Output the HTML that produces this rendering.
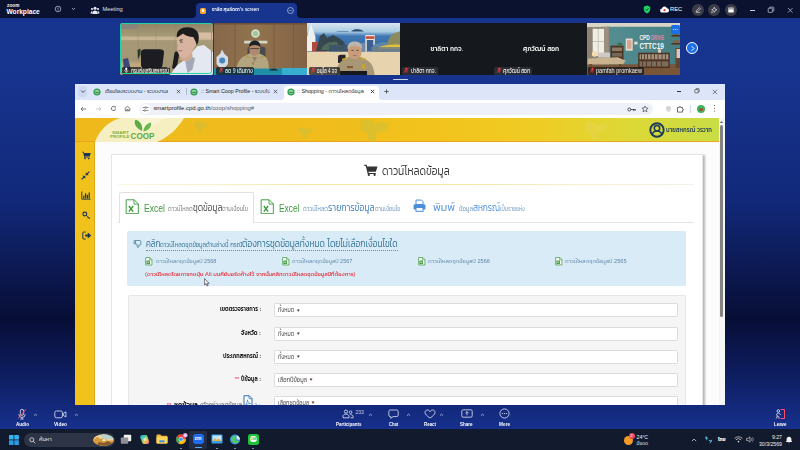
<!DOCTYPE html>
<html lang="th">
<head>
<meta charset="utf-8">
<title>Zoom Workplace</title>
<style>
html,body{margin:0;padding:0;}
body{width:800px;height:450px;overflow:hidden;position:relative;
 font-family:"Liberation Sans","Kanit","Prompt","Noto Sans Thai","Loma",sans-serif;
 background:linear-gradient(to bottom,#17348f 0px,#17348f 70px,#12297a 200px,#0a1446 290px,#070e36 318px,#0c1a58 365px,#16308c 428px);}
.abs{position:absolute;}
.t{position:absolute;white-space:nowrap;line-height:1;}
/* top bar */
#topbar{left:0;top:0;width:800px;height:17px;background:#0b1230;border-top:.8px solid #0b1230;}
/* taskbar */
#taskbar{left:0;top:429.300px;width:800px;height:21px;background:#121a2e;}
/* browser */
#browser{left:75px;top:83.700px;width:649.600px;height:321.300px;background:#fff;overflow:hidden;}

.k{font-family:"Liberation Sans","Kanit","Prompt","Noto Sans Thai","Loma",sans-serif;font-weight:300;}
.sx{display:inline-block;transform-origin:0 50%;white-space:nowrap;}
.sel{position:absolute;left:199px;width:403.500px;height:14px;background:#fff;border:.6px solid #dcdcdc;border-radius:1.500px;box-sizing:border-box;}
.sel .t{left:6px;top:4.300px;font-size:5.600px;color:#444;}
.lab{position:absolute;right:458px;white-space:nowrap;line-height:1;font-size:6px;color:#222;font-weight:500;}
.xl{position:absolute;top:139.500px;}
</style>
</head>
<body>
<div id="topbar" class="abs">
 <div class="t" style="left:7px;top:2.5px;font-size:4.6px;font-weight:bold;color:#fff;letter-spacing:.1px;">zoom</div>
 <div class="t" style="left:6.5px;top:8px;font-size:6.6px;font-weight:bold;color:#fff;">Workplace</div>
 <svg class="abs" style="left:53px;top:3px" width="10" height="10" viewBox="0 0 10 10"><circle cx="5" cy="5" r="2.8" fill="none" stroke="#c9cfe0" stroke-width=".7"/><path d="M5 3.6v2.2" stroke="#c9cfe0" stroke-width=".7"/><circle cx="5" cy="6.6" r=".35" fill="#c9cfe0"/></svg>
 <svg class="abs" style="left:70px;top:5px" width="7" height="6" viewBox="0 0 7 6"><path d="M2 2l1.5 1.6L5 2" fill="none" stroke="#c9cfe0" stroke-width=".7"/></svg>
 <svg class="abs" style="left:90px;top:4.5px" width="10" height="9" viewBox="0 0 10 9"><circle cx="5" cy="2.3" r="1.5" fill="#e8ebf5"/><circle cx="2" cy="3" r="1.1" fill="#e8ebf5"/><circle cx="8" cy="3" r="1.1" fill="#e8ebf5"/><path d="M2.3 8c0-2.2 1-3.4 2.7-3.4S7.7 5.800 7.700 8z" fill="#e8ebf5"/><path d="M.6 7.400c0-1.600.6-2.500 1.700-2.500v2.500zM9.400 7.400c0-1.600-.6-2.500-1.700-2.500v2.500z" fill="#e8ebf5"/></svg>
 <div class="t" style="left:102.500px;top:6px;font-size:5.700px;color:#dfe3ee;">Meeting</div>
 <!-- screen tab -->
 <div class="abs" style="left:195.500px;top:1.500px;width:101.500px;height:16px;background:#17348f;border-radius:4px 4px 0 0;"></div>
 <svg class="abs" style="left:191.500px;top:13px" width="4" height="4" viewBox="0 0 4 4"><path d="M4 0v4H0A4 4 0 0 0 4 0z" fill="#17348f"/></svg>
 <svg class="abs" style="left:297px;top:13px" width="4" height="4" viewBox="0 0 4 4"><path d="M0 0v4h4A4 4 0 0 1 0 0z" fill="#17348f"/></svg>
 <div class="abs" style="left:200px;top:6.500px;width:6px;height:6px;border-radius:1.500px;background:#f5a623;"></div>
 <div class="abs" style="left:202.200px;top:8.300px;width:1.600px;height:2.400px;background:#fff;border-radius:.4px;"></div>
 <div class="t" style="left:211.500px;top:6.200px;font-size:5.400px;font-weight:600;color:#e6e9f5;"><span class="sx" id="z20" style="width:47px;transform:scaleX(0.827);">ชาลิต ศุมล์ตตา's screen</span></div>
 <svg class="abs" style="left:286px;top:5px" width="9" height="9" viewBox="0 0 9 9"><circle cx="4.500" cy="4.500" r="3" fill="none" stroke="#dfe3ee" stroke-width=".6"/><circle cx="3.100" cy="4.500" r=".4" fill="#dfe3ee"/><circle cx="4.500" cy="4.500" r=".4" fill="#dfe3ee"/><circle cx="5.900" cy="4.500" r=".4" fill="#dfe3ee"/></svg>
 <!-- right controls -->
 <svg class="abs" style="left:642.500px;top:4px" width="8" height="9" viewBox="0 0 8 9"><path d="M4 .5l3.200 1.200v2.600c0 2-1.400 3.400-3.200 4.200C2.200 7.700.8 6.300.8 4.300V1.700z" fill="#23d160"/><path d="M2.600 4.400l1 1 1.800-2" fill="none" stroke="#0b1230" stroke-width=".7"/></svg>
 <svg class="abs" style="left:660px;top:5px" width="9" height="7" viewBox="0 0 9 7"><path d="M2.300 6.500a2 2 0 0 1-.3-4 2.600 2.600 0 0 1 5-.2 2.100 2.100 0 0 1-.2 4.200z" fill="#fff"/><circle cx="4.500" cy="4.200" r="1.100" fill="#e02828"/></svg>
 <div class="t" style="left:670px;top:5.800px;font-size:5.800px;color:#fff;">REC</div>
 <div class="abs" style="left:691.500px;top:2.500px;width:12px;height:12px;border-radius:6px;background:#3b3c48;"></div>
 <div class="abs" style="left:708px;top:2.500px;width:12px;height:12px;border-radius:6px;background:#3b3c48;"></div>
 <div class="abs" style="left:724.500px;top:2.500px;width:12px;height:12px;border-radius:6px;background:#3b3c48;"></div>
 <svg class="abs" style="left:691.500px;top:2.500px" width="12" height="12" viewBox="0 0 12 12"><path d="M4 8.200l.5-1.600 3-3 1.100 1.100-3 3zM4.800 8.600c1-.5 2.200.3 3.400-.4" fill="none" stroke="#fff" stroke-width=".6"/></svg>
 <svg class="abs" style="left:708px;top:2.500px" width="12" height="12" viewBox="0 0 12 12"><path d="M6.300 3.200l.8 1.800 1.800.8-1.800.8-.8 1.800-.8-1.800-1.800-.8 1.800-.8z" fill="none" stroke="#fff" stroke-width=".6"/><path d="M4 7.500v1.600M3.200 8.300h1.600" stroke="#fff" stroke-width=".5"/></svg>
 <svg class="abs" style="left:724.500px;top:2.500px" width="12" height="12" viewBox="0 0 12 12"><rect x="3.300" y="3.500" width="5.400" height="5" rx=".6" fill="#fff"/><path d="M3.300 5h5.400" stroke="#3b3c48" stroke-width=".5"/><path d="M4.600 3.500v1.400M6 3.500v1.400M7.400 3.500v1.400" stroke="#3b3c48" stroke-width=".4"/></svg>
 <div class="abs" style="left:750px;top:8.500px;width:5px;height:.7px;background:#c9cfe0;"></div>
 <svg class="abs" style="left:767px;top:5px" width="8" height="8" viewBox="0 0 8 8"><rect x="1.200" y="2.200" width="4.200" height="4.200" rx=".6" fill="none" stroke="#c9cfe0" stroke-width=".7"/><path d="M2.600 2.200V1.600c0-.3.200-.5.500-.5h3.200c.3 0 .5.200.5.500v3.200c0 .3-.2.500-.5.500h-.8" fill="none" stroke="#c9cfe0" stroke-width=".7"/></svg>
 <svg class="abs" style="left:787px;top:6px" width="7" height="7" viewBox="0 0 7 7"><path d="M1 1l4.600 4.600M5.600 1L1 5.600" stroke="#c9cfe0" stroke-width=".7"/></svg>
</div>
<!--VIDEOSTRIP-->
<div class="abs vt" style="left:120.00px;top:23px;width:93.33px;height:52px;overflow:hidden;border-radius:2.500px;background:#a69876;">
<svg class="abs" style="left:0;top:0" width="94" height="52" viewBox="0 0 94 52">
<defs><filter id="b1"><feGaussianBlur stdDeviation=".7"/></filter><filter id="b2"><feGaussianBlur stdDeviation="1.200"/></filter>
<linearGradient id="w1" x1="0" y1="0" x2="0" y2="1"><stop offset="0" stop-color="#8f8467"/><stop offset=".25" stop-color="#a89a78"/><stop offset="1" stop-color="#a29472"/></linearGradient></defs>
<rect width="94" height="52" fill="url(#w1)"/>
<rect x="0" y="0" width="18" height="6" fill="#7f8088" opacity=".6" filter="url(#b1)"/>
<rect x="0" y="13.500" width="94" height="3.600" fill="#c6b592" filter="url(#b1)"/>
<rect x="74" y="9.500" width="20" height="6" fill="#d9bca6" filter="url(#b1)"/>
<path d="M18 0v40M36 0v40M55 0v30" stroke="#93866a" stroke-width=".6" opacity=".7"/>
<rect x="0" y="39" width="40" height="13" fill="#c2a67e" filter="url(#b2)"/>
<g filter="url(#b1)">
<path d="M17.500 27l3-1.500v6l-2.500 5z" fill="#2b3a2a"/>
<path d="M21 29c0-2 1.500-2.800 4-2.800h14c3 0 5.500.8 5 3.500l-1.500 12.500c-.3 2-1.500 3-4 3H24c-2 0-3-1-3-3z" fill="#1d1e21"/>
<path d="M54.500 30c.5-1.500 2-1.800 3.500-1.500l1.500 1-3 16h-4.500z" fill="#1a1b1e"/>
<path d="M3 36l5-1 3 12-7 2z" fill="#3b4a78"/>
<path d="M50 52l6.800-9.500 9-6.500 11.600-12.800 6.500-1.300 9.600 7.700V52z" fill="#e3e8f1"/>
<path d="M65 37l5.500-4 4.500 2.500-2.500 11-5 3.500z" fill="#a3a9b8"/>
<path d="M59 30l6 1 7-3 .5 6-5 4.500-7-1.500z" fill="#d0a88f"/>
<path d="M57 14c0-5.500 3.500-9 10-9 6.500 0 10.500 4 10.500 9.500 0 4.500-1.500 8-3.500 10.500l-3 6c-2 3-5.500 4.500-8.500 3.500-3-1-5-4-5.300-8.500z" fill="#d8b4a0"/>
<path d="M56.800 14.500C56 8.500 60 4.300 67.500 4.300c7.500 0 11.500 4.300 11.300 10.200-.1 3.300-.8 5.800-2 7.800-.8-3.200-1.800-5.800-3.600-8.300-4 0-7.800-1.300-10.200-3.500-1.500 1.200-3.700 2.600-6.200 4z" fill="#1b1a1b"/>
<path d="M59.300 17.300l3.600-.5M60 19.200c.8-.3 1.800-.3 2.600 0" stroke="#3a2a24" stroke-width=".9" fill="none"/>
<path d="M58.500 27.600c1.200.5 2.600.5 3.800 0" stroke="#9a5f55" stroke-width=".9" fill="none"/>
<path d="M57.800 20l-1.300 3.500 1.800.5z" fill="#c59a84"/>
</g>
</svg>
<div class="abs" style="left:2px;top:43.600px;width:47.5px;height:8px;background:rgba(20,22,28,.72);border-radius:1.500px;"><svg class="abs" style="left:1.3px;top:.9px" width="6.500" height="6.500" viewBox="0 0 5 5"><rect x="1.800" y=".3" width="1.400" height="2.600" rx=".7" fill="#fff"/><path d="M1.100 2.300a1.400 1.400 0 0 0 2.800 0M2.500 3.700v.9" fill="none" stroke="#fff" stroke-width=".45"/></svg><div class="t" style="left:8.500px;top:1px;font-size:6.300px;color:#f2f2f2;"><span class="sx" id="z31" style="width:38px;transform:scaleX(0.735);">กรมส่งเสริมสหกรณ์</span></div></div>
<div class="abs" style="left:0;top:0;width:90.100px;height:48.800px;border:1.600px solid #20d4a2;border-radius:2.500px;box-sizing:content-box;"></div>
</div><div class="abs vt" style="left:214.33px;top:23px;width:92.33px;height:52px;overflow:hidden;background:#8c6a47;">
<svg class="abs" style="left:0;top:0" width="93" height="52" viewBox="0 0 93 52">
<defs><linearGradient id="w2" x1="0" y1="0" x2="1" y2="0"><stop offset="0" stop-color="#86684a"/><stop offset=".45" stop-color="#92734f"/><stop offset="1" stop-color="#826245"/></linearGradient></defs>
<rect width="93" height="52" fill="url(#w2)"/>
<path d="M21 0v46M60 0v46M79.500 0v46" stroke="#74522f" stroke-width=".7" opacity=".8"/>
<rect x="0" y="0" width="93" height="1.500" fill="#6f5136"/>
<g filter="url(#b1)">
<circle cx="41.500" cy="10.500" r="4.300" fill="#cfe0c4"/><circle cx="41.500" cy="10.500" r="2.600" fill="#9cc79a"/>
<rect x="30" y="17.800" width="23.500" height="2.600" rx="1" fill="#cfd6c4"/>
<path d="M33.500 26c0-1.500 1-2.300 2.500-2.300h13c1.500 0 2.500.8 2.500 2.300v14h-18z" fill="#39464c" opacity=".85"/>
<path d="M8 26.500l2.500 4.500 3.500 3v7l-3 3.500H5.500l-3-3.500v-7l3.500-3z" fill="#d3dbe6"/>
<circle cx="8.200" cy="37.500" r="3" fill="#4a86bc"/>
<path d="M22.200 46.400c1-7 4-12 9.500-14l4.500-2.400h8.500l5 2.400c4 2 5 7 5.300 14z" fill="#b3a57f"/>
<path d="M38 34l2.600 5 2.600-5z" fill="#8f8363"/>
<path d="M35.500 23.500c0-3.500 2-5.800 5.300-5.800 3.300 0 5.300 2.300 5.300 5.800v3.500c0 3.300-2.300 5.600-5.300 5.600s-5.300-2.300-5.300-5.600z" fill="#b08a6c"/>
<path d="M35.200 24c-.4-4 2-6.600 5.600-6.600s6 2.600 5.600 6.600c-1.300-1.400-3.200-2.100-5.600-2.100s-4.200.7-5.600 2.100z" fill="#1f2326"/>
<path d="M36.300 25.600h9" stroke="#2a2624" stroke-width=".7"/>
<path d="M32 33l3 1.600M49.500 33l-3 1.600" stroke="#b89a3a" stroke-width="1.300"/>
<path d="M38 39.500h2M37.800 41h2.400" stroke="#8a5a3a" stroke-width=".6"/>
</g>
<rect x="0" y="45.500" width="93" height="6.500" fill="#1f8ea6"/>
<rect x="68" y="45" width="25" height="7" fill="#37add0"/>
<path d="M55 47.500c1-2.500 8-2.500 9 0z" fill="#1c2a33" filter="url(#b1)"/>
</svg>
<div class="abs" style="left:2px;top:43.600px;width:38px;height:8px;background:rgba(20,22,28,.72);border-radius:1.500px;"><svg class="abs" style="left:1.3px;top:.9px" width="6.500" height="6.500" viewBox="0 0 5 5"><rect x="1.800" y=".3" width="1.400" height="2.600" rx=".7" fill="#e23b3b"/><path d="M1.100 2.300a1.400 1.400 0 0 0 2.800 0M2.500 3.700v.9" fill="none" stroke="#e23b3b" stroke-width=".45"/><path d="M.7 4.500L4.300.4" stroke="#e23b3b" stroke-width=".5"/></svg><div class="t" style="left:8.500px;top:1px;font-size:6.300px;color:#f2f2f2;"><span class="sx" id="z32" style="width:28px;transform:scaleX(0.806);">ลด 9 เดินทาง</span></div></div>
</div><div class="abs vt" style="left:306.67px;top:23px;width:93.33px;height:52px;overflow:hidden;background:#e6d3ad;">
<svg class="abs" style="left:0;top:0" width="94" height="52" viewBox="0 0 94 52">
<defs><linearGradient id="s3" x1="0" y1="0" x2="0" y2="1"><stop offset="0" stop-color="#d9e6ee"/><stop offset=".3" stop-color="#a9cbe2"/><stop offset=".45" stop-color="#3f78b4"/><stop offset="1" stop-color="#35669c"/></linearGradient></defs>
<rect width="94" height="29" fill="url(#s3)"/>
<rect y="28.500" width="94" height="23.500" fill="#e7d4ae"/>
<g filter="url(#b1)">
<path d="M44 8.500c2-2 4.500-2.500 7-2.200 2.500.2 4.500 1 6 2.200z" fill="#2e4a6e"/>
<path d="M28 9h14l-1-.8h-9z" fill="#5b7fa6"/>
<path d="M0 28V14l2.500-9 1.500-4 1.500 4 3 9v14z" fill="#eef0ee"/>
<rect x="5" y="19" width="15" height="9.500" fill="#b24a3c"/>
<path d="M9 28l4-15 4-3 3 5 6-3 6 3 5 4 3 9z" fill="#36464f"/>
<path d="M14 27c2-6 8-9 16-8l4 8z" fill="#4f6a58"/>
<rect x="22" y="22" width="20" height="6.500" fill="#3c5568"/>
<rect x="58.300" y="12" width="9.500" height="16.500" fill="#e9e4dc"/><rect x="59.800" y="17" width="6.500" height="11.500" fill="#3a5f90"/><rect x="58.800" y="13.300" width="8.500" height="2.500" fill="#c8483a"/><rect x="42" y="20" width="16" height="8.500" fill="#6f8aa6"/>
<path d="M66 28V22l10-3 8 1 10 4v4z" fill="#5e86a6"/>
<path d="M80 22c1-6 4-11 8-12l6-2v16l-7 1z" fill="#8c8a5e"/>
<path d="M72 24c6-2 14-3 22-2v4c-8 0-15 0-22 .5z" fill="#e2c23a"/>
<rect x="64" y="24" width="30" height="5" fill="#6d7c86" opacity=".8"/>
<path d="M31 40v-6c0-1.500 1-2.300 2.500-2.300h5V40z" fill="#26272b"/>
<path d="M29 52c.5-8 3-13.500 8-15.500l6-3.500h9l6.500 3.500c5.500 2 8.500 7.500 9 15.500z" fill="#a89774"/>
<path d="M41 26c0-4 2.500-6.500 6.800-6.500 4.200 0 6.700 2.500 6.700 6.500v3.500c0 4-3 6.500-6.700 6.500-3.800 0-6.800-2.500-6.800-6.500z" fill="#c79d7c"/>
<path d="M40.500 26c-.5-5 2.500-7.500 7.300-7.500 4.700 0 7.700 2.500 7.200 7.500-1.500-2-4-3.300-7.200-3.300s-5.800 1.300-7.300 3.300z" fill="#b9b6b0"/>
<path d="M35 36.500l6-1.500M59 36.500l-6-1.500" stroke="#c9a433" stroke-width="1.600"/><path d="M44.300 27.300h2.400M49.300 27.300h2.400" stroke="#4a362c" stroke-width=".8"/><path d="M46 32.300c1.200.5 2.600.5 3.800 0" stroke="#a0605a" stroke-width=".8" fill="none"/>
<rect x="40" y="43" width="6" height="2.200" fill="#8c5a3a"/><rect x="55" y="41.500" width="3" height="4" fill="#c9a433"/>
</g>
<rect x="33" y="48" width="27" height="4" fill="#17181b"/>
</svg>
<div class="abs" style="left:2px;top:43.600px;width:31px;height:8px;background:rgba(20,22,28,.72);border-radius:1.500px;"><svg class="abs" style="left:1.3px;top:.9px" width="6.500" height="6.500" viewBox="0 0 5 5"><rect x="1.800" y=".3" width="1.400" height="2.600" rx=".7" fill="#e23b3b"/><path d="M1.100 2.300a1.400 1.400 0 0 0 2.800 0M2.500 3.700v.9" fill="none" stroke="#e23b3b" stroke-width=".45"/><path d="M.7 4.500L4.300.4" stroke="#e23b3b" stroke-width=".5"/></svg><div class="t" style="left:8.500px;top:1px;font-size:6.300px;color:#f2f2f2;"><span class="sx" id="z33" style="width:20px;transform:scaleX(0.732);">อนุโล 4 จจ</span></div></div>
</div><div class="abs vt" style="left:400.00px;top:23px;width:93.53px;height:52px;overflow:hidden;background:#15181c;">
<div class="t" style="left:46.6665px;top:21.500px;font-size:7px;font-weight:500;color:#fff;transform:translateX(-50%);"><span class="sx" id="z50" style="width:32.800px;transform:scaleX(0.917);">ชาลิตา กกจ.</span></div>
<div class="abs" style="left:2px;top:43.600px;width:36px;height:8px;background:#2a2d33;border-radius:1.500px;"><svg class="abs" style="left:1.3px;top:.9px" width="6.500" height="6.500" viewBox="0 0 5 5"><rect x="1.800" y=".3" width="1.400" height="2.600" rx=".7" fill="#e23b3b"/><path d="M1.100 2.300a1.400 1.400 0 0 0 2.800 0M2.500 3.700v.9" fill="none" stroke="#e23b3b" stroke-width=".45"/><path d="M.7 4.500L4.300.4" stroke="#e23b3b" stroke-width=".5"/></svg><div class="t" style="left:8.500px;top:1px;font-size:6.300px;color:#f2f2f2;"><span class="sx" id="z34" style="width:25px;transform:scaleX(0.780);">ปาลิตา กกจ.</span></div></div>
</div><div class="abs vt" style="left:493.33px;top:23px;width:93.53px;height:52px;overflow:hidden;background:#15181c;">
<div class="t" style="left:47.5px;top:21.500px;font-size:7px;font-weight:500;color:#fff;transform:translateX(-50%);"><span class="sx" id="z51" style="width:36px;transform:scaleX(0.934);">ศุภวัฒน์ สอก</span></div>
<div class="abs" style="left:1px;top:43.600px;width:37.5px;height:8px;background:#2a2d33;border-radius:1.500px;"><svg class="abs" style="left:1.3px;top:.9px" width="6.500" height="6.500" viewBox="0 0 5 5"><rect x="1.800" y=".3" width="1.400" height="2.600" rx=".7" fill="#e23b3b"/><path d="M1.100 2.300a1.400 1.400 0 0 0 2.800 0M2.500 3.700v.9" fill="none" stroke="#e23b3b" stroke-width=".45"/><path d="M.7 4.500L4.300.4" stroke="#e23b3b" stroke-width=".5"/></svg><div class="t" style="left:8.500px;top:1px;font-size:6.300px;color:#f2f2f2;"><span class="sx" id="z35" style="width:27px;transform:scaleX(0.787);">ศุภวัฒน์ สอก</span></div></div>
</div><div class="abs vt" style="left:586.66px;top:23px;width:93.33px;height:52px;overflow:hidden;background:#4f8a8c;">
<svg class="abs" style="left:0;top:0" width="94" height="52" viewBox="0 0 94 52">
<defs><linearGradient id="w6" x1="0" y1="0" x2="1" y2="0"><stop offset="0" stop-color="#5a9294"/><stop offset="1" stop-color="#457f84"/></linearGradient></defs>
<rect width="94" height="52" fill="url(#w6)"/>
<path d="M0 0h94v3.800H22L0 5z" fill="#d9d4c6"/>
<rect y="41.300" width="94" height="10.700" fill="#7a5638"/>
<g filter="url(#b1)">
<path d="M0 4.500l22-1v38H0z" fill="#8f8778"/>
<rect x="5.400" y="5.800" width="11.600" height="27" fill="#efeee4"/>
<path d="M11.200 5.800v27M5.400 18.500h11.600" stroke="#b9b3a2" stroke-width=".7"/>
<rect x=".5" y="4" width="5" height="34" fill="#8d8174"/><rect x="17" y="4" width="4.600" height="32" fill="#9a8f80"/>
<rect x="23.500" y="22.600" width="13" height="17" fill="#4f3422"/>
<rect x="25" y="24.500" width="10" height="3.600" fill="#8a7a66"/><rect x="25" y="30" width="10" height="3.600" fill="#75665a"/>
<path d="M30 22.500c.5-3.500 4.500-4 5.500-.5z" fill="#3c6e48"/>
<rect x="38.700" y="15.500" width="7" height="12.200" fill="#e6dccd"/><rect x="40" y="17.200" width="4.400" height="8.600" fill="#d8a48c"/>
<rect x="47.300" y="18.700" width="3.200" height="2.800" fill="#e6e0d4"/>
<circle cx="7.600" cy="31" r="2.800" fill="#f4dcae"/>
<rect x="11" y="29.500" width="12" height="5" fill="#cfcbc4"/>
<path d="M.9 35.500l30-1.300 8 3.500-3 3.600H.9z" fill="#c8b290"/>
<rect x="2.500" y="41" width="2.600" height="9" fill="#6b4d33"/><rect x="32" y="41" width="2.600" height="7" fill="#6b4d33"/>
<rect x="51.200" y="29.700" width="31.600" height="15.400" fill="#4e3321"/>
<rect x="52.600" y="31.300" width="28.800" height="5" fill="#a39480"/><rect x="52.600" y="38.300" width="28.800" height="5.200" fill="#7c6c5c"/>
<path d="M54.500 31.300v5M57.500 31.300v5M60.500 31.300v5M64 31.300v5M67.500 31.300v5M71 31.300v5M75 31.300v5M78.500 31.300v5M55.500 38.300v5.200M59.500 38.300v5.200M64.500 38.300v5.200M69.500 38.300v5.200M74.500 38.300v5.200" stroke="#553726" stroke-width=".9"/>
<rect x="71" y="26.300" width="3" height="3.400" fill="#d9cdb8"/>
<rect x="84.500" y="12" width="9.500" height="1.600" fill="#4f3422"/><rect x="84.500" y="20" width="9.500" height="1.600" fill="#4f3422"/>
<rect x="86" y="9" width="5" height="3" fill="#6f5a48"/><rect x="86" y="17" width="6" height="3" fill="#7a6450"/>
<rect x="88.500" y="25" width="5.500" height="20" fill="#5f4430"/>
<rect x="89.500" y="26" width="3.500" height="9" fill="#d5cab8"/>
</g>
<text x="52.400" y="16.600" font-family="Liberation Sans, sans-serif" font-size="6.800" font-weight="bold" fill="#f4f4f4" textLength="10.500" lengthAdjust="spacingAndGlyphs">CPD</text>
<text x="64" y="16.600" font-family="Liberation Sans, sans-serif" font-size="6.800" font-weight="bold" fill="#d88ab0" textLength="13" lengthAdjust="spacingAndGlyphs">DRIVE</text>
<text x="52.400" y="25.500" font-family="Liberation Sans, sans-serif" font-size="9.800" font-weight="bold" fill="#f4f4f4" textLength="24.600" lengthAdjust="spacingAndGlyphs">CTTC19</text>
</svg>
<div class="abs" style="left:84px;top:2px;width:9.300px;height:9px;background:#1a6fe8;border-radius:1.500px;"></div>
<div class="abs" style="left:86.300px;top:6.200px;width:1px;height:1px;border-radius:1px;background:#fff;box-shadow:1.800px 0 0 #fff,3.600px 0 0 #fff;"></div>
<div class="abs" style="left:1px;top:43.600px;width:56.5px;height:8px;background:rgba(20,22,28,.72);border-radius:1.500px;"><svg class="abs" style="left:1.3px;top:.9px" width="6.500" height="6.500" viewBox="0 0 5 5"><rect x="1.800" y=".3" width="1.400" height="2.600" rx=".7" fill="#e23b3b"/><path d="M1.100 2.300a1.400 1.400 0 0 0 2.800 0M2.500 3.700v.9" fill="none" stroke="#e23b3b" stroke-width=".45"/><path d="M.7 4.500L4.300.4" stroke="#e23b3b" stroke-width=".5"/></svg><div class="t" style="left:8.500px;top:1px;font-size:6.300px;color:#f2f2f2;"><span class="sx" id="z36" style="width:46px;transform:scaleX(0.888);">pamfah promkaew</span></div></div>
</div><div class="abs" style="left:685.600px;top:42.100px;width:10px;height:10px;border-radius:8px;background:#1a6fe8;border:1.800px solid #fff;"></div>
<svg class="abs" style="left:685.900px;top:42.400px" width="13" height="13" viewBox="0 0 13 13"><path d="M5.600 4.200l2.300 2.300-2.300 2.300" fill="none" stroke="#fff" stroke-width="1"/></svg>
<div class="abs" style="left:392.500px;top:79px;width:15px;height:1.200px;background:#dfe3ee;border-radius:1px;opacity:.9"></div>
<div id="browser" class="abs">
<!--BROWSER-->
<div class="abs" style="left:0;top:0;width:650px;height:16px;background:#dde6f8;"></div>
<div class="abs" style="left:3px;top:2.500px;width:9px;height:10.500px;border-radius:3px;background:#cdd9f2;"></div>
<svg class="abs" style="left:4.500px;top:5.500px" width="6" height="5" viewBox="0 0 6 5"><path d="M1.200 1.500L3 3.400l1.800-1.900" fill="none" stroke="#333" stroke-width=".8"/></svg>
<svg class="abs" style="left:18px;top:4.300px" width="8" height="8" viewBox="0 0 8 8"><circle cx="4" cy="4" r="3.600" fill="#2f9e58"/><circle cx="4" cy="4" r="2.300" fill="#8fd08f"/><path d="M2.300 4.600h3.400" stroke="#1c6b3a" stroke-width=".8"/></svg>
<div class="t" style="left:29.500px;top:5.200px;font-size:5.300px;font-weight:300;color:#222;width:63px;overflow:hidden;">เชื่อมโยงระบบงาน - ระบบงานสหกรณ์</div>
<svg class="abs" style="left:100.500px;top:5.500px" width="5" height="5" viewBox="0 0 5 5"><path d="M.8.800l3.400 3.400M4.200.8L.8 4.200" stroke="#333" stroke-width=".7"/></svg>
<div class="abs" style="left:110.800px;top:4.500px;width:.5px;height:7px;background:#aeb9d2;"></div>
<svg class="abs" style="left:114.5px;top:4.300px" width="8" height="8" viewBox="0 0 8 8"><circle cx="4" cy="4" r="3.600" fill="#2f9e58"/><circle cx="4" cy="4" r="2.300" fill="#8fd08f"/><path d="M2.300 4.600h3.400" stroke="#1c6b3a" stroke-width=".8"/></svg>
<div class="t" style="left:126px;top:5.200px;font-size:5.300px;font-weight:300;color:#222;width:69px;overflow:hidden;">:: Smart Coop Profile - ระบบโปรไฟล์</div>
<svg class="abs" style="left:197.500px;top:5.500px" width="5" height="5" viewBox="0 0 5 5"><path d="M.8.800l3.400 3.400M4.200.8L.8 4.200" stroke="#333" stroke-width=".7"/></svg>
<div class="abs" style="left:208.500px;top:2px;width:95px;height:14px;background:#fff;border-radius:3.500px 3.500px 0 0;"></div>
<svg class="abs" style="left:205.500px;top:13px" width="3" height="3" viewBox="0 0 3 3"><path d="M3 0v3H0A3 3 0 0 0 3 0z" fill="#fff"/></svg>
<svg class="abs" style="left:303.500px;top:13px" width="3" height="3" viewBox="0 0 3 3"><path d="M0 0v3h3A3 3 0 0 1 0 0z" fill="#fff"/></svg>
<svg class="abs" style="left:212px;top:4.300px" width="8" height="8" viewBox="0 0 8 8"><circle cx="4" cy="4" r="3.600" fill="#2f9e58"/><circle cx="4" cy="4" r="2.300" fill="#8fd08f"/><path d="M2.300 4.600h3.400" stroke="#1c6b3a" stroke-width=".8"/></svg>
<div class="t" style="left:222px;top:5.200px;font-size:5.300px;font-weight:300;color:#222;width:67px;overflow:hidden;">:: Shopping - ดาวน์โหลดข้อมูลสหกรณ์</div>
<svg class="abs" style="left:294.500px;top:5.500px" width="5" height="5" viewBox="0 0 5 5"><path d="M.8.800l3.400 3.400M4.200.8L.8 4.200" stroke="#222" stroke-width=".8"/></svg>
<svg class="abs" style="left:309px;top:5.500px" width="5" height="5" viewBox="0 0 5 5"><path d="M2.500.3v4.400M.3 2.500h4.400" stroke="#333" stroke-width=".7"/></svg>
<div class="abs" style="left:601.500px;top:7.500px;width:4px;height:.6px;background:#333;"></div>
<svg class="abs" style="left:618.500px;top:4.500px" width="6" height="6" viewBox="0 0 6 6"><rect x=".8" y="1.500" width="3.400" height="3.400" rx=".6" fill="none" stroke="#333" stroke-width=".6"/><path d="M1.800 1.500V1c0-.2.100-.3.300-.3h2.800c.2 0 .3.100.3.300v2.800c0 .2-.1.300-.3.300h-.6" fill="none" stroke="#333" stroke-width=".6"/></svg>
<svg class="abs" style="left:637px;top:5px" width="6" height="6" viewBox="0 0 6 6"><path d="M.8.800l4.200 4.200M5 .8L.8 5" stroke="#333" stroke-width=".6"/></svg>
<!-- toolbar -->
<div class="abs" style="left:0;top:16px;width:650px;height:18.500px;background:#fff;"></div>
<div class="abs" style="left:63.500px;top:19.200px;width:514.500px;height:12.500px;border-radius:6.300px;background:#eef1fa;"></div>
<div class="abs" style="left:65.500px;top:20.700px;width:9.500px;height:9.500px;border-radius:5px;background:#fff;"></div>
<svg class="abs" style="left:5px;top:22px" width="7" height="6" viewBox="0 0 7 6"><path d="M6 3H1.200M3 1L1 3l2 2" fill="none" stroke="#444" stroke-width=".7"/></svg>
<svg class="abs" style="left:20px;top:22px" width="7" height="6" viewBox="0 0 7 6"><path d="M1 3h4.800M4 1l2 2-2 2" fill="none" stroke="#b4b4b4" stroke-width=".7"/></svg>
<svg class="abs" style="left:34.500px;top:21.500px" width="7" height="7" viewBox="0 0 7 7"><path d="M5.600 3.500a2.100 2.100 0 1 1-.7-1.600" fill="none" stroke="#444" stroke-width=".7"/><path d="M5.800.9v1.500H4.300z" fill="#444"/></svg>
<svg class="abs" style="left:48.500px;top:21.500px" width="7" height="7" viewBox="0 0 7 7"><path d="M1.200 3.300L3.500 1.300l2.300 2v2.500H1.200z" fill="none" stroke="#444" stroke-width=".7"/><path d="M2.800 5.800V4.300h1.400v1.500" fill="none" stroke="#444" stroke-width=".6"/></svg>
<svg class="abs" style="left:66.500px;top:22px" width="7" height="6" viewBox="0 0 7 6"><path d="M.5 1.500h2.500M5 1.500h1.500M.5 4.500h1.500M4 4.500h2.500" stroke="#444" stroke-width=".6"/><circle cx="3.800" cy="1.500" r=".8" fill="none" stroke="#444" stroke-width=".6"/><circle cx="2.800" cy="4.500" r=".8" fill="none" stroke="#444" stroke-width=".6"/></svg>
<div class="t" style="left:78.400px;top:22px;font-size:5.950px;color:#202124;">smartprofile.cpd.go.th<span style="color:#5f6368">/coop/shopping#</span></div>
<svg class="abs" style="left:551.500px;top:22px" width="10" height="7" viewBox="0 0 10 7"><circle cx="2.300" cy="3.500" r="1.500" fill="none" stroke="#333" stroke-width=".8"/><path d="M3.800 3.500h4.800M6.600 3.500v1.600M8.200 3.500v1.400" stroke="#333" stroke-width=".8"/></svg>
<svg class="abs" style="left:565.500px;top:21px" width="8" height="8" viewBox="0 0 8 8"><path d="M4 1l.9 2 2.200.2-1.700 1.400.6 2.200L4 5.600 2 6.800l.6-2.200L.9 3.200 3.100 3z" fill="none" stroke="#333" stroke-width=".6"/></svg>
<svg class="abs" style="left:589.500px;top:21px" width="7" height="8" viewBox="0 0 7 8"><path d="M3.500.8l2.500.9v2c0 1.600-1 2.700-2.500 3.400C2 6.400 1 5.300 1 3.700v-2z" fill="#d4d6da"/></svg>
<svg class="abs" style="left:600.500px;top:21px" width="9" height="8" viewBox="0 0 9 8"><path d="M1.500 2.500h1.800c-.4-1.400 1.800-1.400 1.400 0h1.800v1.600c1.400-.4 1.400 1.800 0 1.400v1.600h-5z" fill="none" stroke="#333" stroke-width=".7"/></svg>
<div class="abs" style="left:614.500px;top:21.500px;width:.5px;height:7.500px;background:#d6dae6;"></div>
<div class="abs" style="left:622px;top:21.500px;width:8px;height:8px;border-radius:5px;background:#3fb45a;"></div>
<div class="abs" style="left:624px;top:24.300px;width:4px;height:3px;border-radius:2px 2px 1px 1px;background:#b5473c;"></div>
<div class="abs" style="left:639.200px;top:21.500px;width:1.100px;height:1.100px;border-radius:1px;background:#333;box-shadow:0 2.800px 0 #333,0 5.600px 0 #333;"></div>

<div id="page" class="abs" style="left:0;top:34.300px;width:643.500px;height:288px;background:#fcfcfc;overflow:hidden;">
 <!-- header -->
 <div class="abs" style="left:0;top:0;width:643.500px;height:24.500px;background:linear-gradient(to right,#efb91c 0,#f0bd1c 40%,#f2c41d 58%,#efcc24 72%,#dcd836 86%,#c9dd45 100%);border-bottom:1px solid #e9a51b;box-sizing:border-box;"></div>
 <svg class="abs" style="left:0;top:0" width="200" height="24" viewBox="0 0 200 24">
  <path d="M20 24C24 13 32 4 45 0h64C103 10 94 19 82 24z" fill="#f6efc2"/>
  <path d="M60 0h30C84 4 76 10 70 14 62 8 56 4 60 0z" fill="#fbf7dc" opacity=".7"/>
  <path d="M67 13C61 10 58 5 60.500 1.500 65 3 68 7 67 13z" fill="#5cae44"/>
  <path d="M68.500 13.500c0-4.500 3-8 7.500-9 .8 4-2 8-7.500 9z" fill="#6bb84e"/>
  <text x="37" y="15.500" font-family="Liberation Sans, sans-serif" font-size="4.200" font-weight="bold" fill="#7cb342" textLength="17" lengthAdjust="spacingAndGlyphs">SMART</text>
  <text x="35" y="20.300" font-family="Liberation Sans, sans-serif" font-size="4.200" font-weight="bold" fill="#7cb342" textLength="19.500" lengthAdjust="spacingAndGlyphs">PROFILE</text>
  <text x="55.500" y="20.500" font-family="Liberation Sans, sans-serif" font-size="8.500" font-weight="bold" fill="#5aaa44" textLength="24" lengthAdjust="spacingAndGlyphs">COOP</text>
 </svg>
 <!-- butterflies watermark -->
 <svg class="abs" style="left:90px;top:0" width="550" height="24" viewBox="0 0 550 24">
  <g fill="#b9c04a" opacity=".35">
  <path d="M30 4c3-2 6-1 7 2 2-2 5-2 6 0-1 3-3 4-6 4 1 2 0 4-2 5-2-1-3-3-2-5-3 0-5-2-3-6z"/>
  <path d="M134 10c3-2 6-1 7 2 2-2 5-2 6 0-1 3-3 4-6 4 1 2 0 4-2 5-2-1-3-3-2-5-3 0-5-2-3-6z"/>
  <path d="M196 3c6-3 13-2 15 4 4-4 10-4 13 0-2 6-7 8-13 8 2 4 0 8-4 9-4-2-6-5-4-9-6 0-10-5-7-12z"/>
  <path d="M420 5c5-3 10-2 12 3 3-3 8-3 10 0-1 5-5 7-10 7 1 3 0 6-3 8-3-2-5-5-3-8-5 0-8-4-6-10z" fill="#e8d860"/>
  </g>
 </svg>
 <!-- user -->
 <svg class="abs" style="left:573.500px;top:4.500px" width="16" height="16" viewBox="0 0 16 16"><circle cx="8" cy="8" r="6.700" fill="none" stroke="#1d3a5c" stroke-width="1.900"/><circle cx="8" cy="6.300" r="2.700" fill="none" stroke="#1d3a5c" stroke-width="1.500"/><path d="M3.300 12.500c.6-2.400 2.300-3.400 4.700-3.400s4.100 1 4.700 3.400" fill="none" stroke="#1d3a5c" stroke-width="1.500"/></svg>
 <div class="t" style="left:591.300px;top:8.600px;font-size:6.800px;color:#1d3a5c;font-weight:500;"><span class="sx" id="z40" style="width:46px;transform:scaleX(0.865);">นายสหกรณ์ วรวาท</span></div>
 <!-- sidebar -->
 <div class="abs" style="left:0;top:24.500px;width:20px;height:263px;background:#f2c21c;border-right:.6px solid #e0a91a;box-sizing:border-box;"></div>
 
 <svg class="abs" style="left:6.500px;top:33.500px" width="9" height="8.500" viewBox="0 0 9 8.500"><path d="M.3.800h1.500l.4 1.200h6.500l-1 3.400H2.800l.3 1h4.400v.7H2.400L1.200 1.600H.3z" fill="#1d3557"/><circle cx="3" cy="7.600" r=".8" fill="#1d3557"/><circle cx="6.800" cy="7.600" r=".8" fill="#1d3557"/></svg>
 <svg class="abs" style="left:6px;top:53.500px" width="9" height="9" viewBox="0 0 9 9"><path d="M8.400.6L5.800 3.200M.6 8.400l2.600-2.600" stroke="#1d3557" stroke-width="1.200"/><path d="M4.700 1.300v3h3zM4.300 7.700v-3h-3z" fill="#1d3557"/></svg>
 <svg class="abs" style="left:6px;top:73.500px" width="10" height="9" viewBox="0 0 10 9"><path d="M.8.500v7.700h8.700" fill="none" stroke="#1d3557" stroke-width=".9"/><rect x="2.200" y="4.500" width="1.200" height="3" fill="#1d3557"/><rect x="4" y="2.200" width="1.200" height="5.300" fill="#1d3557"/><rect x="5.800" y="3.800" width="1.200" height="3.700" fill="#1d3557"/><rect x="7.600" y="1.500" width="1.200" height="6" fill="#1d3557"/></svg>
 <svg class="abs" style="left:6.500px;top:93.500px" width="9" height="9" viewBox="0 0 9 9"><circle cx="2.800" cy="3" r="1.900" fill="none" stroke="#1d3557" stroke-width="1.100"/><path d="M4.300 4.300l3.700 3.300M6.300 6.200l-1 1M7.500 7.200l-.8.800" stroke="#1d3557" stroke-width="1"/></svg>
 <svg class="abs" style="left:6.500px;top:113.500px" width="10" height="9" viewBox="0 0 10 9"><path d="M3.600 1H1.800c-.6 0-1 .4-1 1v5c0 .6.400 1 1 1h1.800" fill="none" stroke="#1d3557" stroke-width="1"/><path d="M3.200 3.400h2.600V1.500L9.300 4.500 5.800 7.500V5.600H3.200z" fill="#1d3557"/></svg>

 
<div class="abs" style="left:35.5px;top:36.3px;width:592.500px;height:260px;background:#fff;border:.7px solid #e6e6e6;box-shadow:1.500px 1px 2px rgba(0,0,0,.28);box-sizing:border-box;"></div>
<svg class="abs" style="left:289px;top:46.3px" width="14" height="12" viewBox="0 0 14 12"><path d="M.3.800h2.300l.6 1.700h10.300l-1.600 5.200H4.400l.4 1.300h7v1H3.700L1.800 1.900H.3z" fill="#333"/><circle cx="4.800" cy="10.900" r="1.100" fill="#333"/><circle cx="10.600" cy="10.900" r="1.100" fill="#333"/></svg>
<div class="t k" style="left:306.8px;top:47.3px;font-size:12px;color:#333;"><span class="sx" id="f1" style="width:67.6px;transform:scaleX(0.850);">ดาวน์โหลดข้อมูล</span></div>
<div class="abs" style="left:43px;top:65.7px;width:576px;height:.9px;background:linear-gradient(to right,#fbf7e2 0,#f3e7a6 35%,#f3e7a6 60%,#f6f0d4 85%,#f4f1e6 100%);"></div>
<div class="abs" style="left:43px;top:104.5px;width:576px;height:.7px;background:#e4e4e4;"></div>
<div class="abs" style="left:43.8px;top:74px;width:135.500px;height:31.300px;background:#fff;border:.7px solid #e2e2e2;border-bottom:none;border-radius:2px 2px 0 0;box-sizing:border-box;"></div>
<svg class="abs" style="left:50px;top:80.8px" width="14.500" height="15.500" viewBox="0 0 15 16"><path d="M1.200.8h8.300l4.300 4.300v10.100H1.200z" fill="#fff" stroke="#3f9a3f" stroke-width="1"/><path d="M9.300.8v4.500h4.500" fill="none" stroke="#3f9a3f" stroke-width=".9"/><path d="M4 7.200l4.400 5.800M8.400 7.200L4 13" stroke="#3f9a3f" stroke-width="1.500"/></svg>
<div class="t k" style="left:68.6px;top:84.8px;font-size:10.6px;color:#3f9a3f;font-weight:400;"><span class="sx" id="f2" style="width:21px;transform:scaleX(0.811);">Excel</span></div>
<div class="t k" style="left:93px;top:85.3px;font-size:10px;color:#444;"><span class="sx" id="f3" style="width:24.6px;transform:scaleX(0.922);font-size:6.200px;color:#777;">ดาวน์โหลด</span><span class="sx" id="f4" style="width:29.4px;transform:scaleX(0.834);">ชุดข้อมูล</span><span class="sx" id="f5" style="width:26px;transform:scaleX(0.922);font-size:6.200px;color:#777;">ตามเงื่อนไข</span></div>
<svg class="abs" style="left:185px;top:80.8px" width="14.500" height="15.500" viewBox="0 0 15 16"><path d="M1.200.8h8.300l4.300 4.300v10.100H1.200z" fill="#fff" stroke="#3f9a3f" stroke-width="1"/><path d="M9.300.8v4.500h4.500" fill="none" stroke="#3f9a3f" stroke-width=".9"/><path d="M4 7.200l4.400 5.800M8.400 7.200L4 13" stroke="#3f9a3f" stroke-width="1.500"/></svg>
<div class="t k" style="left:204px;top:84.8px;font-size:10.6px;color:#3f9a3f;font-weight:400;"><span class="sx" id="f6" style="width:20.6px;transform:scaleX(0.795);">Excel</span></div>
<div class="t k" style="left:228px;top:85.3px;font-size:10px;color:#3b7bbf;"><span class="sx" id="f7" style="width:25px;transform:scaleX(0.937);font-size:6.200px;color:#6d93bd;">ดาวน์โหลด</span><span class="sx" id="f8" style="width:46.6px;transform:scaleX(0.862);">รายการข้อมูล</span><span class="sx" id="f9" style="width:25.4px;transform:scaleX(0.901);font-size:6.200px;color:#6d93bd;">ตามเงื่อนไข</span></div>
<svg class="abs" style="left:338.3px;top:81.3px" width="13" height="13.500" viewBox="0 0 13 13"><path d="M3 .8h5.500l1.500 1.500v3H3z" fill="#fff" stroke="#4a8fdc" stroke-width="1"/><path d="M.6 6.300c0-.8.600-1.400 1.400-1.400h9c.8 0 1.400.6 1.400 1.400v4H.6z" fill="#4a8fdc"/><rect x="3" y="8.300" width="7" height="3.800" fill="#fff" stroke="#4a8fdc" stroke-width="1"/></svg>
<div class="t k" style="left:358px;top:85.3px;font-size:10px;color:#4a8fdc;"><span class="sx" id="f10" style="width:22px;transform:scaleX(1.079);">พิมพ์</span><span class="sx" id="f11" style="width:4px;transform:scaleX(1.438);">&nbsp;</span><span class="sx" id="f12" style="width:14px;transform:scaleX(0.976);font-size:6.200px;color:#6d93bd;">ข้อมูล</span><span class="sx" id="f13" style="width:27px;transform:scaleX(0.829);">สหกรณ์</span><span class="sx" id="f14" style="width:25px;transform:scaleX(0.856);font-size:6.200px;color:#6d93bd;">เป็นรายแห่ง</span></div>
<div class="abs" style="left:52px;top:113.5px;width:559px;height:54.800px;background:#d9ebf7;border-radius:1.500px;"></div>
<svg class="abs" style="left:58.3px;top:121.5px" width="9" height="9" viewBox="0 0 9 9"><path d="M2.500 1.500h4.300c.6 0 1 .4 1 1v2.800c0 .5-.4.900-.9.900H5.800v1.500c0 .5-.4.800-.8.800s-.8-.3-.8-.8V5.500L2.500 4.800zM2.500 1.800H1v3h1.500" fill="none" stroke="#31708f" stroke-width=".7"/></svg>
<div class="t k" style="left:70.6px;top:121.3px;font-size:10px;color:#2f6f93;"><span class="sx" id="f15" style="width:14.4px;transform:scaleX(0.800);">คลิก</span><span class="sx" id="f16" style="width:82.4px;transform:scaleX(0.949);font-size:6.200px;">ดาวน์โหลดชุดข้อมูลด้านล่างนี้ กรณี</span><span class="sx" id="f17" style="width:155.6px;transform:scaleX(0.846);">ต้องการชุดข้อมูลทั้งหมด โดยไม่เลือกเงื่อนไขใด</span></div>
<div class="abs" style="left:70.6px;top:132.2px;width:252.500px;height:0;border-top:.7px dotted #5f93ad;"></div>
<div class="abs" style="left:70px;top:139.2px;line-height:0;"><svg width="7.500" height="8.500" viewBox="0 0 7 8"><path d="M.6.500h3.900l2 2v5H.6z" fill="#fff" stroke="#3f9a3f" stroke-width=".7"/><path d="M4.300.5v2.200h2.200" fill="none" stroke="#3f9a3f" stroke-width=".6"/><rect x="1.300" y="3.300" width="3.400" height="3.400" fill="#3f9a3f"/><path d="M2.200 4.100l1.600 1.800M3.800 4.100L2.200 5.900" stroke="#fff" stroke-width=".5"/></svg></div>
<div class="t k" style="left:80.6px;top:140.8px;font-size:5.8px;color:#5f84a8;"><span class="sx" id="f18" style="width:60.4px;transform:scaleX(0.951);">ดาวน์โหลดชุดข้อมูลปี 2568</span></div>
<div class="abs" style="left:207.2px;top:139.2px;line-height:0;"><svg width="7.500" height="8.500" viewBox="0 0 7 8"><path d="M.6.500h3.900l2 2v5H.6z" fill="#fff" stroke="#3f9a3f" stroke-width=".7"/><path d="M4.300.5v2.200h2.200" fill="none" stroke="#3f9a3f" stroke-width=".6"/><rect x="1.300" y="3.300" width="3.400" height="3.400" fill="#3f9a3f"/><path d="M2.200 4.100l1.600 1.800M3.800 4.100L2.200 5.900" stroke="#fff" stroke-width=".5"/></svg></div>
<div class="t k" style="left:217px;top:140.8px;font-size:5.8px;color:#5f84a8;"><span class="sx" id="f19" style="width:60.4px;transform:scaleX(0.951);">ดาวน์โหลดชุดข้อมูลปี 2567</span></div>
<div class="abs" style="left:343px;top:139.2px;line-height:0;"><svg width="7.500" height="8.500" viewBox="0 0 7 8"><path d="M.6.500h3.900l2 2v5H.6z" fill="#fff" stroke="#3f9a3f" stroke-width=".7"/><path d="M4.300.5v2.200h2.200" fill="none" stroke="#3f9a3f" stroke-width=".6"/><rect x="1.300" y="3.300" width="3.400" height="3.400" fill="#3f9a3f"/><path d="M2.200 4.100l1.600 1.800M3.800 4.100L2.200 5.900" stroke="#fff" stroke-width=".5"/></svg></div>
<div class="t k" style="left:353px;top:140.8px;font-size:5.8px;color:#5f84a8;"><span class="sx" id="f20" style="width:62px;transform:scaleX(0.976);">ดาวน์โหลดชุดข้อมูลปี 2566</span></div>
<div class="abs" style="left:480px;top:139.2px;line-height:0;"><svg width="7.500" height="8.500" viewBox="0 0 7 8"><path d="M.6.500h3.900l2 2v5H.6z" fill="#fff" stroke="#3f9a3f" stroke-width=".7"/><path d="M4.300.5v2.200h2.200" fill="none" stroke="#3f9a3f" stroke-width=".6"/><rect x="1.300" y="3.300" width="3.400" height="3.400" fill="#3f9a3f"/><path d="M2.200 4.100l1.600 1.800M3.800 4.100L2.200 5.900" stroke="#fff" stroke-width=".5"/></svg></div>
<div class="t k" style="left:489.5px;top:140.8px;font-size:5.8px;color:#5f84a8;"><span class="sx" id="f21" style="width:61.5px;transform:scaleX(0.969);">ดาวน์โหลดชุดข้อมูลปี 2565</span></div>
<div class="t k" style="left:70px;top:154.1px;font-size:5.8px;color:#e8262e;font-weight:400;"><span class="sx" id="f22" style="width:210.6px;transform:scaleX(0.983);">(ดาวน์โหลดโดยการกดปุ่ม Alt บนคีย์บอร์ดค้างไว้ จากนั้นคลิกดาวน์โหลดชุดข้อมูลปีที่ต้องการ)</span></div>
<svg class="abs" style="left:128.5px;top:160.5px" width="6" height="9" viewBox="0 0 6 9"><path d="M.6.600v6.400l1.500-1.400 1 2.400 1-.4-1-2.300h2z" fill="#fff" stroke="#222" stroke-width=".6"/></svg>
<div class="abs" style="left:52.5px;top:176.8px;width:558.500px;height:120px;background:#f5f5f5;border:.7px solid #e6e6e6;border-radius:1.500px;box-sizing:border-box;"></div>
<div class="sel" style="top:185.5px;"></div>
<div class="t k" style="left:202.9px;top:189.5px;font-size:6.3px;color:#3a3a3a;"><span class="sx" id="f23" style="width:16.2px;transform:scaleX(0.865);">ทั้งหมด</span><span style="font-size:4.500px;vertical-align:.8px;margin-left:1.800px;">&#9660;</span></div>
<div class="t k" style="left:145.0px;top:188.5px;font-size:6.2px;color:#222;font-weight:600;"><span class="sx" id="f24" style="width:41.3px;transform:scaleX(0.881);">เขตตรวจราชการ :</span></div>
<div class="sel" style="top:208.8px;"></div>
<div class="t k" style="left:202.9px;top:212.8px;font-size:6.3px;color:#3a3a3a;"><span class="sx" id="f25" style="width:16.2px;transform:scaleX(0.865);">ทั้งหมด</span><span style="font-size:4.500px;vertical-align:.8px;margin-left:1.800px;">&#9660;</span></div>
<div class="t k" style="left:166.3px;top:211.8px;font-size:6.2px;color:#222;font-weight:600;"><span class="sx" id="f26" style="width:20px;transform:scaleX(0.913);">จังหวัด :</span></div>
<div class="sel" style="top:232px;"></div>
<div class="t k" style="left:202.9px;top:236px;font-size:6.3px;color:#3a3a3a;"><span class="sx" id="f27" style="width:16.2px;transform:scaleX(0.865);">ทั้งหมด</span><span style="font-size:4.500px;vertical-align:.8px;margin-left:1.800px;">&#9660;</span></div>
<div class="t k" style="left:148.0px;top:235px;font-size:6.2px;color:#222;font-weight:600;"><span class="sx" id="f28" style="width:38.3px;transform:scaleX(0.882);">ประเภทสหกรณ์ :</span></div>
<div class="sel" style="top:255.3px;"></div>
<div class="t k" style="left:202.9px;top:259.3px;font-size:6.3px;color:#3a3a3a;"><span class="sx" id="f29" style="width:29px;transform:scaleX(0.922);">เลือกปีข้อมูล</span><span style="font-size:4.500px;vertical-align:.8px;margin-left:1.800px;">&#9660;</span></div>
<div class="t k" style="left:159.8px;top:258.9px;font-size:5.8px;color:#e8262e;font-weight:400;">**</div>
<div class="t k" style="left:166.3px;top:258.3px;font-size:6.2px;color:#222;font-weight:600;"><span class="sx" id="f30" style="width:20px;transform:scaleX(0.879);">ปีข้อมูล :</span></div>
<div class="sel" style="top:278px;"></div>
<div class="t k" style="left:202.9px;top:282px;font-size:6.3px;color:#3a3a3a;"><span class="sx" id="f31" style="width:31px;transform:scaleX(0.881);">เลือกชุดข้อมูล</span><span style="font-size:4.500px;vertical-align:.8px;margin-left:1.800px;">&#9660;</span></div>
<div class="t k" style="left:91.7px;top:284.6px;font-size:5.8px;color:#e8262e;font-weight:400;">**</div>
<div class="t k" style="left:98.5px;top:284px;font-size:6.2px;color:#222;font-weight:600;"><span class="sx" id="f32" style="width:24px;transform:scaleX(1.051);">ชุดข้อมูล</span></div>
<div class="t k" style="left:124.5px;top:284px;font-size:6.2px;color:#555;"><span class="sx" id="f33" style="width:42px;transform:scaleX(0.950);">(ตัวอย่างชุดข้อมูล</span></div>
<svg class="abs" style="left:167.5px;top:277.3px" width="10" height="12.500" viewBox="0 0 8 10"><path d="M.8.600h4.200l2.200 2.200v6.600H.8z" fill="#fff" stroke="#2f6fb0" stroke-width=".8"/><path d="M4.800.6v2.400h2.400" fill="none" stroke="#2f6fb0" stroke-width=".6"/><path d="M2.200 7.800c1-1.600 1.500-3 1.300-4 .3 1.800 1.300 2.800 2.500 3-1.600 0-2.800.4-3.800 1z" fill="none" stroke="#2f6fb0" stroke-width=".5"/></svg>
<div class="t k" style="left:180px;top:284px;font-size:6.2px;color:#555;">) :</div>
</div>
<!-- scrollbar -->
<div class="abs" style="left:643.500px;top:34px;width:6.500px;height:288px;background:#f6f6f6;"></div>
<svg class="abs" style="left:644px;top:36px" width="5" height="4" viewBox="0 0 5 4"><path d="M.8 3L2.500 1 4.200 3z" fill="#6b6b6b"/></svg>
<div class="abs" style="left:645.300px;top:41px;width:2.700px;height:192px;border-radius:1.500px;background:#838383;"></div>

</div>

<div class="abs" style="left:0;top:405px;width:800px;height:24px;"></div>
<svg class="abs" style="left:16px;top:408px" width="12" height="12" viewBox="0 0 12 12"><rect x="4.300" y="1.300" width="3.400" height="6" rx="1.700" fill="none" stroke="#e6e9f5" stroke-width=".8"/><path d="M2.800 6.200a3.200 3.200 0 0 0 6.400 0M6 9.400v1.600M4.300 11h3.400" fill="none" stroke="#e6e9f5" stroke-width=".8"/><path d="M2 10.500L10 1.200" stroke="#ff4d6a" stroke-width="1"/></svg>
<svg class="abs" style="left:32.5px;top:412.500px" width="5" height="4" viewBox="0 0 5 4"><path d="M.9 2.700L2.500 1.200l1.600 1.500" fill="none" stroke="#e6e9f5" stroke-width=".65"/></svg><div class="t" style="left:15.50px;top:421.600px;font-size:5.300px;font-weight:bold;color:#fff;"><span class="sx" id="z1" style="width:13px;transform:scaleX(0.866);">Audio</span></div>
<svg class="abs" style="left:54px;top:409.500px" width="13" height="9" viewBox="0 0 13 9"><rect x=".8" y="1" width="7.600" height="6.800" rx="1.600" fill="none" stroke="#e6e9f5" stroke-width=".8"/><path d="M9.300 3.400l2.600-1.600v5.200L9.300 5.400z" fill="none" stroke="#e6e9f5" stroke-width=".8"/></svg>
<svg class="abs" style="left:73.5px;top:412.500px" width="5" height="4" viewBox="0 0 5 4"><path d="M.9 2.700L2.500 1.200l1.600 1.500" fill="none" stroke="#e6e9f5" stroke-width=".65"/></svg><div class="t" style="left:54.00px;top:421.600px;font-size:5.300px;font-weight:bold;color:#fff;"><span class="sx" id="z2" style="width:13px;transform:scaleX(0.907);">Video</span></div>
<svg class="abs" style="left:342px;top:408.500px" width="12" height="10" viewBox="0 0 12 10"><circle cx="4" cy="2.600" r="1.600" fill="none" stroke="#e6e9f5" stroke-width=".8"/><path d="M1 8.800V7.500c0-1.500 1.200-2.400 3-2.400s3 .9 3 2.400v1.300z" fill="none" stroke="#e6e9f5" stroke-width=".8"/><circle cx="8.600" cy="3.200" r="1.300" fill="none" stroke="#e6e9f5" stroke-width=".8"/><path d="M8.300 5.600c1.700 0 2.800.8 2.800 2.200v1H8.500" fill="none" stroke="#e6e9f5" stroke-width=".8"/></svg>
<div class="t" style="left:355.500px;top:410px;font-size:5px;color:#c9d0e8;">233</div>
<svg class="abs" style="left:368.0px;top:412.500px" width="5" height="4" viewBox="0 0 5 4"><path d="M.9 2.700L2.500 1.200l1.600 1.500" fill="none" stroke="#e6e9f5" stroke-width=".65"/></svg><div class="t" style="left:335.80px;top:421.600px;font-size:5.300px;font-weight:bold;color:#fff;"><span class="sx" id="z3" style="width:25.4px;transform:scaleX(0.838);">Participants</span></div>
<svg class="abs" style="left:388px;top:408.500px" width="11" height="10" viewBox="0 0 11 10"><path d="M2.200 1h6.600c.8 0 1.400.6 1.400 1.400v3.800c0 .8-.6 1.400-1.400 1.400H5L2.800 9.300V7.600h-.6C1.400 7.600.8 7 .8 6.200V2.400C.8 1.600 1.400 1 2.200 1z" fill="none" stroke="#e6e9f5" stroke-width=".8"/></svg>
<svg class="abs" style="left:405.5px;top:412.500px" width="5" height="4" viewBox="0 0 5 4"><path d="M.9 2.700L2.500 1.200l1.600 1.500" fill="none" stroke="#e6e9f5" stroke-width=".65"/></svg><div class="t" style="left:388.90px;top:421.600px;font-size:5.300px;font-weight:bold;color:#fff;"><span class="sx" id="z4" style="width:9.2px;transform:scaleX(0.781);">Chat</span></div>
<svg class="abs" style="left:423.500px;top:408.500px" width="12" height="10" viewBox="0 0 12 10"><path d="M6 9C3.500 7.300 1 5.500 1 3.400 1 2 2 1 3.300 1 4.400 1 5.400 1.600 6 2.600 6.600 1.600 7.600 1 8.700 1 10 1 11 2 11 3.400 11 5.500 8.500 7.300 6 9z" fill="none" stroke="#e6e9f5" stroke-width=".8"/></svg>
<svg class="abs" style="left:438.5px;top:412.500px" width="5" height="4" viewBox="0 0 5 4"><path d="M.9 2.700L2.500 1.200l1.600 1.500" fill="none" stroke="#e6e9f5" stroke-width=".65"/></svg><div class="t" style="left:423.50px;top:421.600px;font-size:5.300px;font-weight:bold;color:#fff;"><span class="sx" id="z5" style="width:12px;transform:scaleX(0.831);">React</span></div>
<svg class="abs" style="left:460.500px;top:409px" width="12" height="9" viewBox="0 0 12 9"><rect x=".8" y=".8" width="10.400" height="7.400" rx="1.400" fill="none" stroke="#e6e9f5" stroke-width=".8"/><path d="M6 6.300V2.700M4.400 4.200L6 2.600l1.600 1.600" fill="none" stroke="#e6e9f5" stroke-width=".8"/></svg>
<svg class="abs" style="left:479.5px;top:412.500px" width="5" height="4" viewBox="0 0 5 4"><path d="M.9 2.700L2.500 1.200l1.600 1.500" fill="none" stroke="#e6e9f5" stroke-width=".65"/></svg><div class="t" style="left:460.20px;top:421.600px;font-size:5.300px;font-weight:bold;color:#fff;"><span class="sx" id="z6" style="width:12.6px;transform:scaleX(0.855);">Share</span></div>
<svg class="abs" style="left:499px;top:408px" width="11" height="11" viewBox="0 0 11 11"><circle cx="5.500" cy="5.500" r="4.600" fill="none" stroke="#e6e9f5" stroke-width=".8"/><circle cx="3.400" cy="5.500" r=".6" fill="#e6e9f5"/><circle cx="5.500" cy="5.500" r=".6" fill="#e6e9f5"/><circle cx="7.600" cy="5.500" r=".6" fill="#e6e9f5"/></svg>
<div class="t" style="left:499.00px;top:421.600px;font-size:5.300px;font-weight:bold;color:#fff;"><span class="sx" id="z7" style="width:11px;transform:scaleX(0.869);">More</span></div>
<svg class="abs" style="left:774px;top:408px" width="12" height="12" viewBox="0 0 12 12"><path d="M6.500 1.500h4v9h-4" fill="none" stroke="#ff4d6a" stroke-width="1"/><circle cx="4.300" cy="3" r="1.300" fill="none" stroke="#e6e9f5" stroke-width=".8"/><path d="M2.300 10.500l1-2.500-.8-1.800 1.500-1.400 1.600.8 1 1.400M3.300 8l1.700 1v1.700" fill="none" stroke="#e6e9f5" stroke-width=".8"/></svg>
<div class="t" style="left:773.75px;top:421.600px;font-size:5.300px;font-weight:bold;color:#fff;"><span class="sx" id="z8" style="width:12.5px;transform:scaleX(0.832);">Leave</span></div>

<div id="taskbar" class="abs">

<svg class="abs" style="left:8.500px;top:6px" width="10" height="10" viewBox="0 0 10 10"><rect x="0" y="0" width="4.600" height="4.600" rx=".5" fill="#35b6f2"/><rect x="5.300" y="0" width="4.600" height="4.600" rx=".5" fill="#35b6f2"/><rect x="0" y="5.300" width="4.600" height="4.600" rx=".5" fill="#2a9be0"/><rect x="5.300" y="5.300" width="4.600" height="4.600" rx=".5" fill="#2a9be0"/></svg>
<div class="abs" style="left:24px;top:4px;width:91px;height:14px;border-radius:7px;background:#2d3446;"></div>
<svg class="abs" style="left:29px;top:7.500px" width="7" height="7" viewBox="0 0 7 7"><circle cx="2.800" cy="2.800" r="2" fill="none" stroke="#e8e8e8" stroke-width=".8"/><path d="M4.300 4.300l2 2" stroke="#e8e8e8" stroke-width=".8"/></svg>
<div class="t" style="left:39px;top:8px;font-size:5.600px;color:#d8d8d8;">ค้นหา</div>
<svg class="abs" style="left:92.500px;top:5px" width="21" height="12" viewBox="0 0 21 12"><defs><clipPath id="cpl"><ellipse cx="10.500" cy="6" rx="10.300" ry="5.800"/></clipPath></defs><g clip-path="url(#cpl)"><rect width="21" height="12" fill="#e9d3a0"/><rect x="9" y="0" width="12" height="5" fill="#b7d3d0"/><path d="M0 12V6l4-3 4 2 3-1 4 3 6-1v6z" fill="#d89b3a"/><path d="M3 12l3-4 5 1 4-2 6 3v2z" fill="#8a5a2b"/><path d="M9 7l2-3 2 3z" fill="#f4ead0"/></g></svg>
<svg class="abs" style="left:120px;top:5px" width="12" height="11" viewBox="0 0 12 11"><rect x="3.800" y=".8" width="7.400" height="6.400" rx=".8" fill="#f1f1f1"/><rect x=".8" y="3.400" width="7.400" height="6.400" rx=".8" fill="#8d9096"/></svg>
<svg class="abs" style="left:138.500px;top:4.500px" width="11" height="11" viewBox="0 0 11 11"><defs><linearGradient id="cp1" x1="0" y1="0" x2="1" y2="1"><stop offset="0" stop-color="#2f8ff0"/><stop offset=".35" stop-color="#4fd1a0"/><stop offset=".65" stop-color="#f4c63a"/><stop offset="1" stop-color="#e65ac8"/></linearGradient></defs><path d="M3.500 1h3.200c.8 0 1.400.4 1.700 1.200L10 7.300c.4 1.300-.3 2.700-1.800 2.700H5c-.8 0-1.400-.5-1.700-1.200L1.200 3.600C.8 2.300 1.800 1 3.500 1z" fill="url(#cp1)"/><path d="M4.200 4.200l2.600-.4.700 2.800-2.600.5z" fill="#ffffff" opacity=".55"/></svg>
<svg class="abs" style="left:156px;top:5px" width="12" height="10" viewBox="0 0 12 10"><path d="M.5 1.300c0-.4.300-.8.800-.8h3l1.200 1.200h5.200c.4 0 .8.400.8.800v6.200c0 .4-.4.800-.8.800H1.300c-.5 0-.8-.4-.8-.8z" fill="#f6b73c"/><rect x=".5" y="3" width="11" height="6.500" rx=".8" fill="#fbd45f"/><rect x="3.500" y="6.300" width="5" height="2" fill="#3f8fe0"/></svg>
<svg class="abs" style="left:174.500px;top:4px" width="13" height="12" viewBox="0 0 13 12"><circle cx="6" cy="6.300" r="5" fill="#e8453c"/><path d="M6 6.300L1.700 3.800A5 5 0 0 0 3.500 10.600z" fill="#34a853"/><path d="M6 6.300l-2.500 4.300A5 5 0 0 0 11 6.300z" fill="#fbbc05"/><circle cx="6" cy="6.300" r="2.200" fill="#fff"/><circle cx="6" cy="6.300" r="1.700" fill="#4285f4"/><circle cx="10.300" cy="2.300" r="2.300" fill="#d9a0e8"/><circle cx="10.300" cy="2.300" r="1.100" fill="#f4e8f8"/></svg>
<div class="abs" style="left:189px;top:1.500px;width:18px;height:18px;border-radius:2px;background:#232c44;"></div>
<div class="abs" style="left:193px;top:4.500px;width:10.500px;height:10.500px;border-radius:3px;background:#1f6cf0;"></div>
<div class="t" style="left:194.600px;top:7px;font-size:5px;font-weight:bold;color:#fff;letter-spacing:-.2px;">zm</div>
<div class="abs" style="left:195px;top:17.800px;width:6.500px;height:1.300px;border-radius:1px;background:#5aa9f5;"></div>
<svg class="abs" style="left:211px;top:5px" width="12" height="10" viewBox="0 0 12 10"><rect x=".5" y=".5" width="11" height="9" rx="1" fill="#3aa0e8"/><rect x="1.500" y="1.500" width="9" height="5.500" fill="#bfe3f8"/><path d="M1.500 7l2.500-3 2 2 1.500-1.500 3 2.500z" fill="#e9b04a"/><circle cx="8.500" cy="3" r=".9" fill="#fff2a8"/></svg>
<svg class="abs" style="left:229px;top:4.500px" width="12" height="11" viewBox="0 0 12 11"><circle cx="6" cy="5.500" r="5" fill="#2f9ae0"/><path d="M2 4c1.500-2 4-2.500 6-1.500-1 .8-1.500 2-1 3.200.5 1.300 2 1.500 3.500 1C9.500 9 7 10 4.800 9 3 8 2 6 2 4z" fill="#55c46a"/><path d="M8 1.500c1.600.6 2.800 2 3 3.800-1 .8-2.600.6-3.200-.5C7.300 3.800 7.500 2.400 8 1.500z" fill="#e9e9e9"/></svg>
<div class="abs" style="left:247.500px;top:4.500px;width:11px;height:11px;border-radius:2.500px;background:#1ec43b;"></div>
<div class="abs" style="left:249.500px;top:7px;width:7px;height:5.400px;border-radius:3px;background:#fff;"></div>
<div class="t" style="left:250.500px;top:8.300px;font-size:2.800px;font-weight:bold;color:#1ec43b;">LINE</div>
<div class="abs" style="left:179.500px;top:18.500px;width:2.500px;height:1px;border-radius:1px;background:#9aa0ad;"></div>
<div class="abs" style="left:215.500px;top:18.500px;width:2.500px;height:1px;border-radius:1px;background:#9aa0ad;"></div>
<div class="abs" style="left:233.500px;top:18.500px;width:2.500px;height:1px;border-radius:1px;background:#9aa0ad;"></div>
<div class="abs" style="left:251.500px;top:18.500px;width:2.500px;height:1px;border-radius:1px;background:#9aa0ad;"></div>
<!-- weather -->
<div class="abs" style="left:624px;top:6.500px;width:9px;height:9px;border-radius:5px;background:#f59a23;"></div>
<div class="abs" style="left:628.500px;top:4px;width:6px;height:6px;border-radius:3px;background:#e8495a;"></div>
<div class="t" style="left:630.300px;top:4.800px;font-size:4.400px;color:#fff;">2</div>
<div class="t" style="left:636.500px;top:6px;font-size:5.200px;color:#f0f0f0;">24°C</div>
<div class="t" style="left:636.500px;top:12.500px;font-size:4.800px;color:#d0d0d0;">มีแดด</div>
<!-- tray -->
<svg class="abs" style="left:691px;top:8.500px" width="6" height="4" viewBox="0 0 6 4"><path d="M.8 3.200L3 1l2.200 2.200" fill="none" stroke="#e8e8e8" stroke-width=".7"/></svg>
<svg class="abs" style="left:703.500px;top:6.500px" width="9" height="8" viewBox="0 0 9 8"><path d="M1.200 1.300c.8-.6 1.700-.3 2 .5.300 1-.3 1.800-1.200 2.200M4.800 4.300l3.200 1M6 7.200l1.700-3.400" fill="none" stroke="#59c1e8" stroke-width=".9"/><circle cx="2.300" cy="2" r=".9" fill="#59c1e8"/></svg>
<div class="t" style="left:718px;top:8.500px;font-size:4.800px;color:#f0f0f0;font-weight:bold;">ไทย</div>
<svg class="abs" style="left:733.500px;top:7px" width="9" height="7" viewBox="0 0 9 7"><path d="M.6 2.400a5.600 5.600 0 0 1 7.800 0M1.900 3.800a3.700 3.700 0 0 1 5.200 0" fill="none" stroke="#e8e8e8" stroke-width=".7"/><circle cx="4.500" cy="5.600" r=".8" fill="#e8e8e8"/></svg>
<svg class="abs" style="left:745.500px;top:7px" width="8" height="7" viewBox="0 0 8 7"><path d="M.6 2.500h1.400l2-1.700v5.400l-2-1.700H.6z" fill="none" stroke="#e8e8e8" stroke-width=".6"/><path d="M5.300 2.200c.6.700.6 1.900 0 2.600M6.400 1.300c1.100 1.300 1.100 3.100 0 4.400" fill="none" stroke="#e8e8e8" stroke-width=".5"/></svg>
<div class="t" style="right:18px;top:5.800px;font-size:5.200px;color:#f0f0f0;">9:27</div>
<div class="t" style="right:18px;top:12.300px;font-size:5.200px;color:#f0f0f0;">30/3/2569</div>
<svg class="abs" style="left:785px;top:6.500px" width="8" height="8" viewBox="0 0 8 8"><path d="M4 .8c1.500 0 2.400 1 2.400 2.400v1.600l.8 1.200H.8l.8-1.200V3.200C1.600 1.800 2.500.8 4 .8z" fill="#f0f0f0"/><path d="M3.200 6.600c.2.500.5.700.8.700s.6-.2.800-.7z" fill="#f0f0f0"/></svg>

</div>
</body>
</html>
